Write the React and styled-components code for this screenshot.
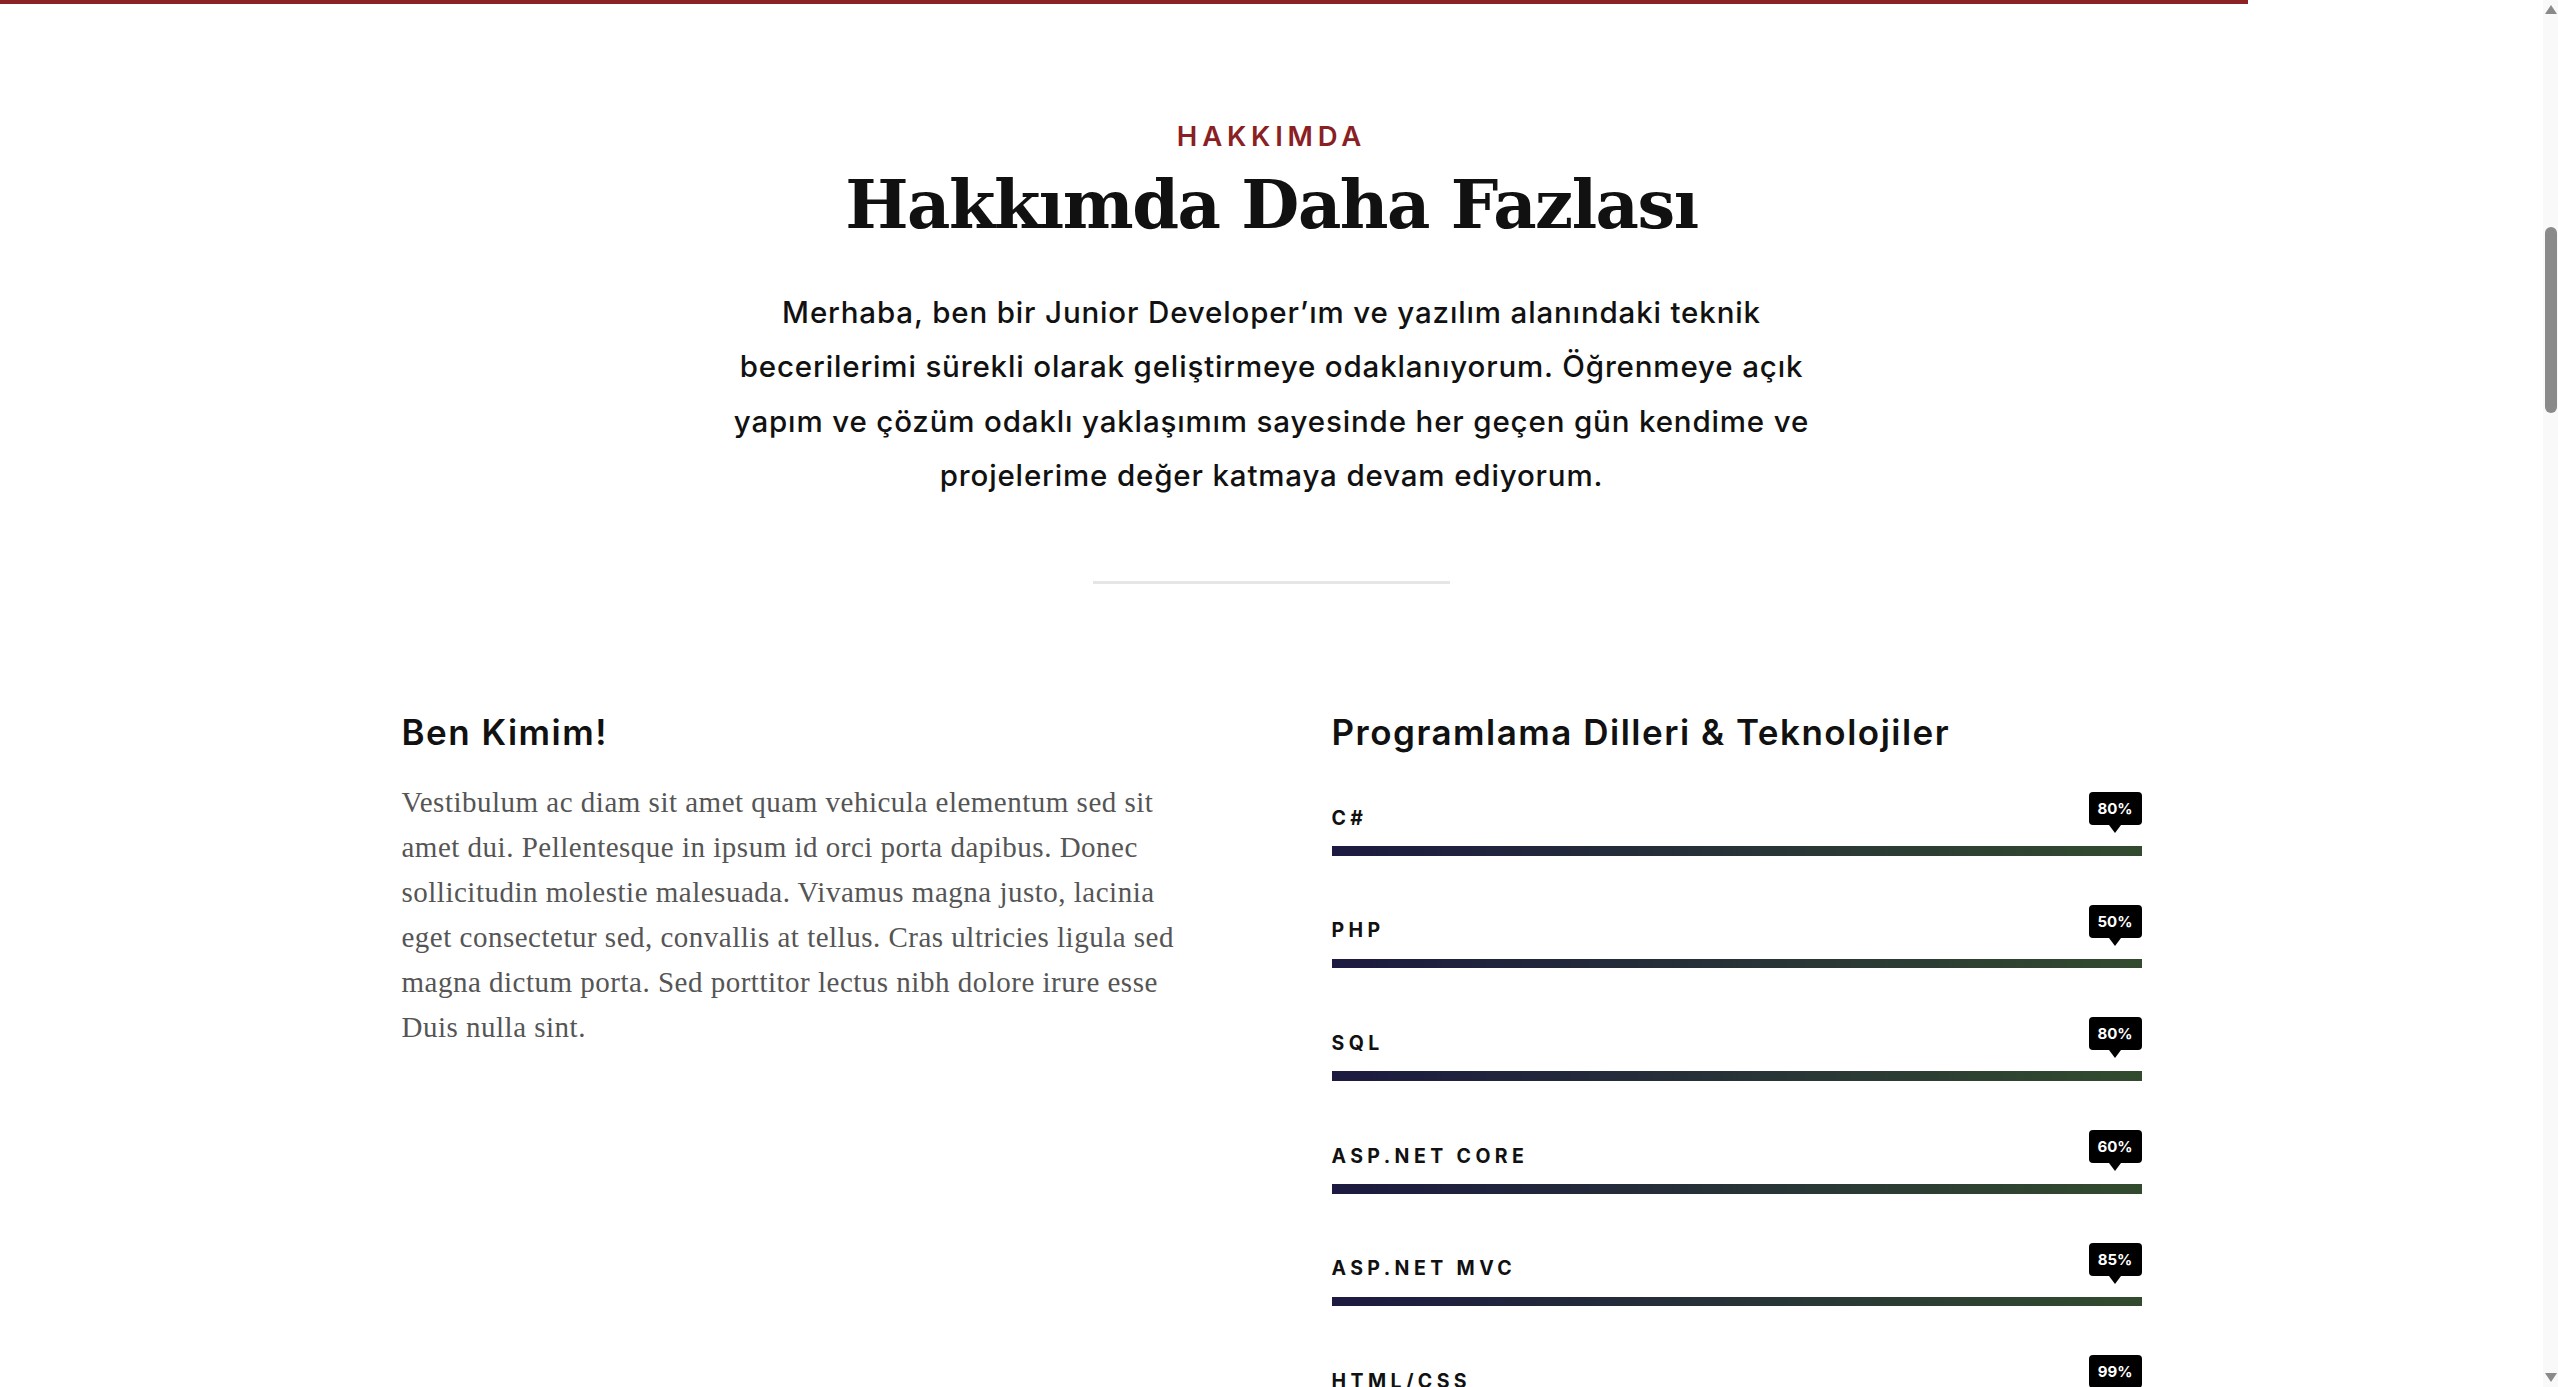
import styled, { createGlobalStyle } from "styled-components";

const GlobalStyle = createGlobalStyle`
  html, body {
    margin: 0;
    padding: 0;
    background: #fff;
  }
  body {
    padding-right: 15px;
    font-family: "Inter", "Noto Sans", sans-serif;
    color: #111;
  }
`;

const ProgressBar = styled.div`
  position: fixed;
  top: 0;
  left: 0;
  width: 2248px;
  height: 4px;
  background-color: #8b2326;
  z-index: 10;
`;

// page scrollbar, drawn because the capture has none of its own
const ScrollTrack = styled.div`
  position: fixed;
  top: 0;
  right: 0;
  width: 15px;
  height: 100vh;
  background-color: #f9f9f9;
  display: flex;
  flex-direction: column;
  align-items: center;
  z-index: 10;
`;

const ScrollArrow = styled.span`
  width: 0;
  height: 0;
  margin-top: ${(p) => (p.$down ? "auto" : "5px")};
  margin-bottom: ${(p) => (p.$down ? "5px" : "0")};
  border-left: 6px solid transparent;
  border-right: 6px solid transparent;
  border-bottom: ${(p) => (p.$down ? "0" : "9px solid #8a8a8a")};
  border-top: ${(p) => (p.$down ? "9px solid #8a8a8a" : "0")};
`;

const ScrollThumb = styled.span`
  width: 12px;
  height: 186px;
  margin-top: 213px;
  border-radius: 6px;
  background-color: #8a8a8a;
`;

const Section = styled.section`
  padding: 120px 0 140px;
`;

const Container = styled.div`
  width: 1740px;
  margin: 0 auto;
`;

const Intro = styled.div`
  display: flex;
  flex-direction: column;
  align-items: center;
  text-align: center;
`;

const Eyebrow = styled.span`
  font-family: "Inter", sans-serif;
  font-size: 27.5px;
  line-height: 33px;
  font-weight: 600;
  letter-spacing: 4.8px;
  color: #8a1f24;
`;

const Title = styled.h2`
  margin: 13px 0 0;
  font-family: "DejaVu Serif", "Liberation Serif", serif;
  font-size: 67px;
  line-height: 77px;
  font-weight: 700;
  letter-spacing: -1.5px;
  color: #111;
`;

const Lead = styled.p`
  margin: 42px 0 0;
  max-width: 1115px;
  font-family: "Inter", sans-serif;
  font-size: 29.5px;
  line-height: 54.4px;
  font-weight: 500;
  letter-spacing: 0.85px;
  color: #111;
`;

const Divider = styled.hr`
  width: 357px;
  height: 3px;
  margin: 78px 0 0;
  border: 0;
  background-color: #e6e6e6;
`;

const Columns = styled.div`
  display: grid;
  grid-template-columns: 1fr 810px;
  column-gap: 40px;
  margin-top: 129px;
`;

const ColTitle = styled.h3`
  margin: 0;
  font-family: "Inter", sans-serif;
  font-size: 35px;
  line-height: 39.6px;
  font-weight: 600;
  letter-spacing: 1.5px;
  color: #111;
`;

const Text = styled.p`
  margin: 28px 0 0;
  max-width: 790px;
  font-family: "Liberation Serif", serif;
  font-size: 29px;
  line-height: 45px;
  letter-spacing: 0.5px;
  color: #555;
`;

const SkillList = styled.div`
  margin-top: 40px;
  display: flex;
  flex-direction: column;
  gap: 49px;
`;

const SkillHead = styled.div`
  display: flex;
  justify-content: space-between;
  align-items: flex-end;
`;

const SkillName = styled.span`
  font-family: "Inter", sans-serif;
  font-size: 19.5px;
  line-height: 1;
  font-weight: 700;
  letter-spacing: 4.4px;
  text-transform: uppercase;
  margin-bottom: -3px;
`;

const Badge = styled.span`
  position: relative;
  min-width: 53px;
  height: 33px;
  padding: 0 8px;
  box-sizing: border-box;
  display: flex;
  align-items: center;
  justify-content: center;
  border-radius: 4px;
  background-color: #000;
  color: #fff;
  font-family: "Inter", sans-serif;
  font-size: 15px;
  font-weight: 700;

  &::after {
    content: "";
    position: absolute;
    top: 100%;
    left: 50%;
    transform: translateX(-50%);
    border-left: 6px solid transparent;
    border-right: 6px solid transparent;
    border-top: 8px solid #000;
  }
`;

const Track = styled.div`
  margin-top: 21px;
  height: 9.6px;
  background: linear-gradient(to right, #1c1a40, #324b2e);
`;

const skills = [
  { name: "C#", level: 80 },
  { name: "PHP", level: 50 },
  { name: "SQL", level: 80 },
  { name: "ASP.NET Core", level: 60 },
  { name: "ASP.NET MVC", level: 85 },
  { name: "HTML/CSS", level: 99 },
];

function Skill({ name, level }) {
  return (
    <div>
      <SkillHead>
        <SkillName>{name}</SkillName>
        <Badge>{level}%</Badge>
      </SkillHead>
      <Track />
    </div>
  );
}

export default function App() {
  return (
    <>
      <GlobalStyle />
      <ProgressBar />
      <ScrollTrack>
        <ScrollArrow />
        <ScrollThumb />
        <ScrollArrow $down />
      </ScrollTrack>
      <Section>
        <Container>
          <Intro>
            <Eyebrow>HAKKIMDA</Eyebrow>
            <Title>Hakkımda Daha Fazlası</Title>
            <Lead>
              Merhaba, ben bir Junior Developer’ım ve yazılım alanındaki teknik
              becerilerimi sürekli olarak geliştirmeye odaklanıyorum. Öğrenmeye
              açık yapım ve çözüm odaklı yaklaşımım sayesinde her geçen gün
              kendime ve projelerime değer katmaya devam ediyorum.
            </Lead>
            <Divider />
          </Intro>
          <Columns>
            <div>
              <ColTitle>Ben Kimim!</ColTitle>
              <Text>
                Vestibulum ac diam sit amet quam vehicula elementum sed sit amet
                dui. Pellentesque in ipsum id orci porta dapibus. Donec
                sollicitudin molestie malesuada. Vivamus magna justo, lacinia
                eget consectetur sed, convallis at tellus. Cras ultricies ligula
                sed magna dictum porta. Sed porttitor lectus nibh dolore irure
                esse Duis nulla sint.
              </Text>
            </div>
            <div>
              <ColTitle>Programlama Dilleri &amp; Teknolojiler</ColTitle>
              <SkillList>
                {skills.map((s) => (
                  <Skill key={s.name} {...s} />
                ))}
              </SkillList>
            </div>
          </Columns>
        </Container>
      </Section>
    </>
  );
}
